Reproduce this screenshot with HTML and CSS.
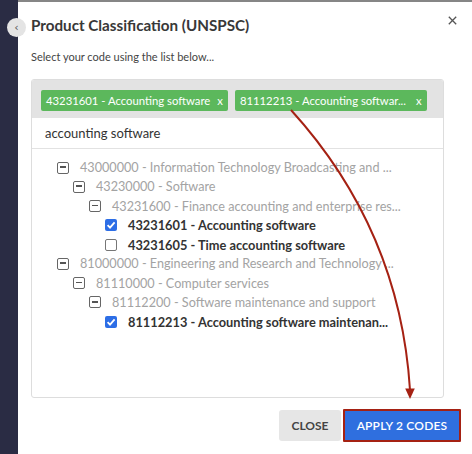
FILE: index.html
```html
<!DOCTYPE html>
<html lang="en">
<head>
<meta charset="utf-8">
<title>Product Classification (UNSPSC)</title>
<link rel="stylesheet" href="styles.css">
</head>
<body>
<div class="app">
  <aside class="sidebar"></aside>
  <main class="main">
    <div class="topstrip"></div>
    <section class="modal">
      <header class="modal-header">
        <h1 class="title">Product Classification (UNSPSC)</h1>
        <button class="close-x" aria-label="Close">
          <svg width="9" height="9" viewBox="0 0 9 9"><path d="M0.8 0.8 L8.2 8.2 M8.2 0.8 L0.8 8.2" stroke="#555" stroke-width="1.3" fill="none"/></svg>
        </button>
      </header>
      <p class="subtitle">Select your code using the list below...</p>
      <div class="picker">
        <div class="tags">
          <span class="tag"><span class="tag-label">43231601 - Accounting software</span><span class="tag-x">x</span></span>
          <span class="tag"><span class="tag-label tag-label-long">81112213 - Accounting softwar...</span><span class="tag-x">x</span></span>
        </div>
        <div class="search">accounting software</div>
        <ul class="tree">
          <li class="row lvl0 muted"><span class="minus"></span><span class="label">43000000 - Information Technology Broadcasting and ...</span></li>
          <li class="row lvl1 muted"><span class="minus"></span><span class="label">43230000 - Software</span></li>
          <li class="row lvl2 muted"><span class="minus"></span><span class="label">43231600 - Finance accounting and enterprise res...</span></li>
          <li class="row lvl3 strong"><span class="check on"><svg width="12" height="12" viewBox="0 0 12 12"><path d="M2.6 6.2 L5 8.6 L9.6 3.4" stroke="#fff" stroke-width="1.8" fill="none"/></svg></span><span class="label">43231601 - Accounting software</span></li>
          <li class="row lvl3 strong"><span class="check"></span><span class="label">43231605 - Time accounting software</span></li>
          <li class="row lvl0 muted"><span class="minus"></span><span class="label">81000000 - Engineering and Research and Technology ...</span></li>
          <li class="row lvl1 muted"><span class="minus"></span><span class="label">81110000 - Computer services</span></li>
          <li class="row lvl2 muted"><span class="minus"></span><span class="label">81112200 - Software maintenance and support</span></li>
          <li class="row lvl3 strong"><span class="check on"><svg width="12" height="12" viewBox="0 0 12 12"><path d="M2.6 6.2 L5 8.6 L9.6 3.4" stroke="#fff" stroke-width="1.8" fill="none"/></svg></span><span class="label">81112213 - Accounting software maintenan...</span></li>
        </ul>
      </div>
      <footer class="footer">
        <button class="btn btn-close">CLOSE</button>
        <button class="btn btn-apply">APPLY 2 CODES</button>
      </footer>
    </section>
  </main>
  <button class="back" aria-label="Back">‹</button>
  <svg class="annot" width="472" height="454" viewBox="0 0 472 454">
    <path d="M291 110 Q400 230 410 390" stroke="#a52113" stroke-width="2" fill="none"/>
    <polygon points="410,399 405.2,388.5 414.8,388.5" fill="#a52113"/>
  </svg>
</div>
</body>
</html>
```
FILE: styles.css
```css
* { box-sizing: border-box; }
html, body { margin: 0; padding: 0; }
body {
  width: 472px;
  height: 454px;
  overflow: hidden;
  background: #fff;
  font-family: Lato, "Open Sans", "Liberation Sans", sans-serif;
  color: #333;
}
.app {
  position: relative;
  display: grid;
  grid-template-columns: 18px minmax(0, 1fr);
  height: 454px;
}
.sidebar { background: #2a2c44; }
.main { display: flex; flex-direction: column; min-width: 0; }
.topstrip { height: 2px; background: #868686; }
.modal {
  flex: 1;
  background: #fff;
  display: flex;
  flex-direction: column;
  min-width: 0;
}
.modal-header {
  display: flex;
  justify-content: space-between;
  align-items: flex-start;
  padding: 13px 15px 0 13px;
}
.title {
  margin: 0;
  font-size: 15.2px;
  line-height: 20px;
  font-weight: 700;
  color: #383838;
}
.close-x {
  border: 0;
  background: none;
  padding: 0;
  margin-top: 1px;
  width: 9px;
  height: 9px;
  display: block;
}
.close-x svg { display: block; }
.subtitle {
  margin: 15px 0 0 13px;
  font-size: 11px;
  line-height: 14px;
  color: #444;
}
.picker {
  margin: 15px 28px 0 13px;
  border: 1px solid #ddd;
  border-radius: 3px;
  overflow: hidden;
}
.tags {
  background: #e3e3e3;
  padding: 10px 9px 7px;
  display: flex;
  gap: 7px;
}
.tag {
  display: inline-flex;
  align-items: center;
  height: 21px;
  padding: 0 5px 0 5px;
  background: #5cb85c;
  color: #fff;
  font-size: 11.3px;
  border-radius: 2px;
  white-space: nowrap;
}
.tag-x { margin-left: 7px; }
.tag-label-long { margin-right: 3px; }
.search {
  height: 31px;
  line-height: 30px;
  border-bottom: 1px solid #e2e2e2;
  padding-left: 13px;
  font-size: 13px;
  color: #333;
}
.tree {
  list-style: none;
  margin: 0;
  padding: 9px 0 0 0;
  height: 248px;
}
.row {
  display: flex;
  align-items: center;
  height: 19.25px;
  font-size: 12.65px;
  white-space: nowrap;
}
.lvl0 { padding-left: 25px; }
.lvl1 { padding-left: 41px; }
.lvl2 { padding-left: 57px; }
.lvl3 { padding-left: 73px; }
.muted { color: #a3a3a3; }
.strong { color: #333; font-weight: 700; font-size: 12.8px; }
.minus, .check {
  flex: none;
  width: 12px;
  height: 12px;
  margin-right: 11px;
  border-radius: 2px;
  position: relative;
}
.minus { border: 1.3px solid #666; }
.minus::after {
  content: "";
  position: absolute;
  left: 2px;
  right: 2px;
  top: 3.6px;
  height: 1.6px;
  background: #555;
}
.check { border: 1px solid #767676; background: #fff; }
.check.on { border: 0; background: #2d6ee6; }
.check svg { display: block; }
.footer {
  display: flex;
  justify-content: flex-end;
  align-items: center;
  gap: 2px;
  padding: 11px 11px 0 0;
}
.btn {
  font-family: inherit;
  font-size: 12px;
  font-weight: 700;
  border-radius: 3px;
  cursor: pointer;
  padding: 0;
  text-align: center;
}
.btn-close {
  width: 62px;
  height: 31px;
  border: 0;
  background: #e6e6e6;
  color: #444;
}
.btn-apply {
  width: 118px;
  height: 33px;
  border: 2px solid #a52113;
  border-radius: 1px;
  background: #2f6fdf;
  color: #fff;
  font-weight: 600;
  letter-spacing: 0.2px;
}
.back {
  position: absolute;
  left: 7px;
  top: 18px;
  width: 19px;
  height: 19px;
  border-radius: 50%;
  border: 0;
  padding: 0;
  background: #e4e4e4;
  color: #555;
  font-size: 11px;
  line-height: 19px;
  text-align: center;
  font-family: "DejaVu Sans", sans-serif;
}
.annot {
  position: absolute;
  left: 0;
  top: 0;
  pointer-events: none;
}
```
